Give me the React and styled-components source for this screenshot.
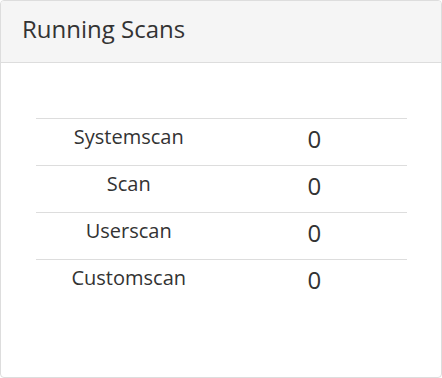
import styled, { createGlobalStyle } from 'styled-components';

const GlobalStyle = createGlobalStyle`
	html, body {
		margin: 0;
		padding: 0;
		background: #fff;
	}
	body {
		font-family: 'Open Sans', 'Liberation Sans', sans-serif;
		color: #333;
	}
`;

const scans = [
	{ name: 'Systemscan', count: 0 },
	{ name: 'Scan', count: 0 },
	{ name: 'Userscan', count: 0 },
	{ name: 'Customscan', count: 0 },
];

const App = () => {
	return (
		<>
			<GlobalStyle />
			<Panel>
				<PanelHeading>
					<PanelTitle>Running Scans</PanelTitle>
				</PanelHeading>
				<PanelBody>
					<ScanTable>
						{scans.map((scan) => (
							<ScanRow key={scan.name}>
								<ScanName>{scan.name}</ScanName>
								<ScanCount>{scan.count}</ScanCount>
							</ScanRow>
						))}
					</ScanTable>
				</PanelBody>
			</Panel>
		</>
	);
};

export default App;

const Panel = styled.div`
	box-sizing: border-box;
	width: 442px;
	height: 378px;
	border: 1px solid #ddd;
	border-radius: 4px;
	background: #fff;
	overflow: hidden;
	display: flex;
	flex-direction: column;
`;

const PanelHeading = styled.div`
	height: 61px;
	padding: 0 21px;
	display: flex;
	align-items: center;
	background: #f5f5f5;
	border-bottom: 1px solid #ddd;
`;

const PanelTitle = styled.h3`
	margin: 0;
	font-size: 24px;
	font-weight: 400;
	color: #333;
	line-height: 1;
	padding-bottom: 6px;
`;

const PanelBody = styled.div`
	padding: 55px 34px 0 35px;
`;

const ScanTable = styled.div`
	display: flex;
	flex-direction: column;
`;

const ScanRow = styled.div`
	display: grid;
	grid-template-columns: 1fr 1fr;
	align-items: center;
	height: 46px;
	border-top: 1px solid #ddd;
`;

const ScanName = styled.span`
	text-align: center;
	font-size: 20px;
	line-height: 1;
	padding-bottom: 11px;
`;

const ScanCount = styled.span`
	text-align: center;
	font-size: 24px;
	line-height: 1;
	padding-bottom: 6px;
`;
